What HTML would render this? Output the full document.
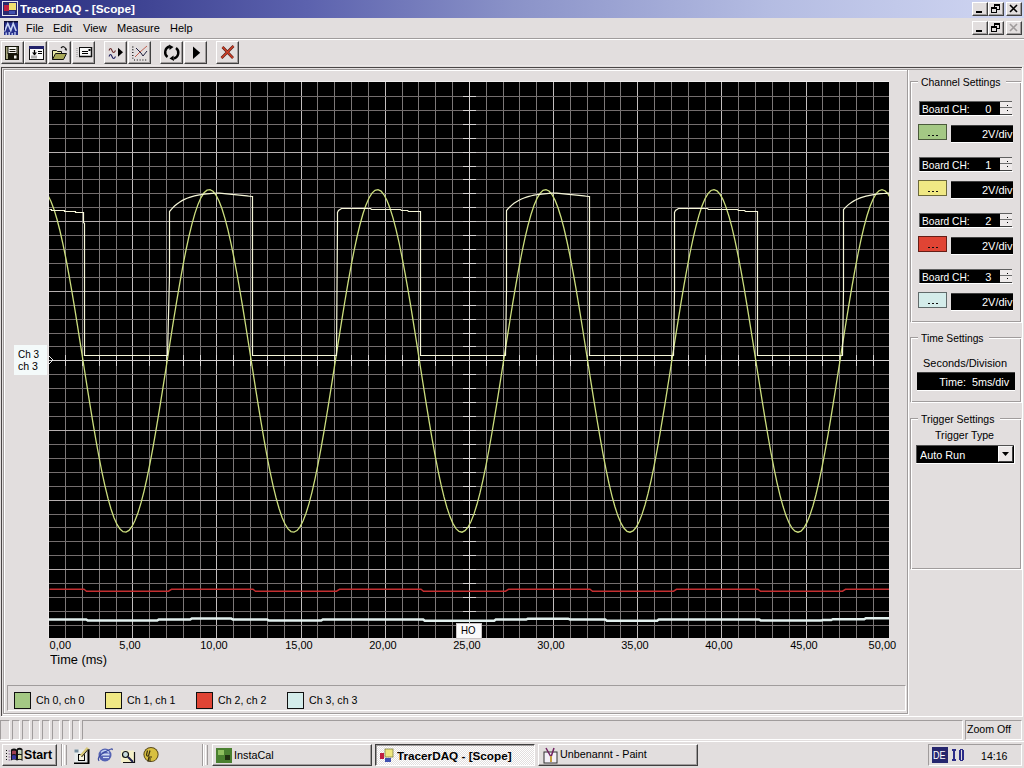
<!DOCTYPE html>
<html><head><meta charset="utf-8"><title>TracerDAQ - [Scope]</title>
<style>
html,body{margin:0;padding:0;}
body{width:1024px;height:768px;overflow:hidden;position:relative;background:#E2DEDE;font-family:"Liberation Sans",sans-serif;}
body>div{position:absolute;}
.t{white-space:pre;transform-origin:left center;}
</style></head><body>
<div style="left:0px;top:0px;width:1024px;height:18px;background:linear-gradient(to right,#262A7C 0%,#5C62AE 30%,#8A92C8 50%,#B4BCE2 75%,#D0D6F2 100%)"></div>
<div class="t" style="left:20px;top:4.27px;font-size:11.5px;line-height:11.5px;font-weight:700;color:#FFF;transform:scaleX(1.022);">TracerDAQ - [Scope]</div>
<svg style="position:absolute;left:2px;top:1px" width="16" height="15" viewBox="0 0 16 15">
<rect x="0.5" y="0.5" width="15" height="14" fill="#2A2A70" stroke="#E8E8F0"/>
<rect x="2" y="4" width="5" height="6" fill="#C02040"/>
<rect x="7" y="2" width="7" height="7" fill="#F0E070"/>
<rect x="7" y="10" width="6" height="3" fill="#4050B0"/>
</svg>
<div style="left:972px;top:2px;width:16px;height:14px;background:#E2DEDE;border-top:1px solid #FFF;border-left:1px solid #FFF;border-right:1px solid #404040;border-bottom:1px solid #404040;box-sizing:border-box"></div>
<div style="left:973px;top:3px;width:14px;height:12px;border-right:1px solid #A09C9C;border-bottom:1px solid #A09C9C;box-sizing:border-box"></div>
<div style="left:976px;top:11px;width:6px;height:2px;background:#000"></div>
<div style="left:988px;top:2px;width:16px;height:14px;background:#E2DEDE;border-top:1px solid #FFF;border-left:1px solid #FFF;border-right:1px solid #404040;border-bottom:1px solid #404040;box-sizing:border-box"></div>
<div style="left:989px;top:3px;width:14px;height:12px;border-right:1px solid #A09C9C;border-bottom:1px solid #A09C9C;box-sizing:border-box"></div>
<svg style="position:absolute;left:988px;top:2px" width="16" height="14" fill="#000"><rect x="6" y="2" width="6" height="2"/><rect x="11" y="4" width="1" height="4"/><rect x="9" y="7" width="2" height="1"/><rect x="6" y="4" width="1" height="1"/><rect x="3" y="5" width="6" height="2"/><rect x="3" y="7" width="1" height="4"/><rect x="8" y="7" width="1" height="4"/><rect x="3" y="10" width="6" height="1"/></svg>
<div style="left:1006px;top:2px;width:16px;height:14px;background:#E2DEDE;border-top:1px solid #FFF;border-left:1px solid #FFF;border-right:1px solid #404040;border-bottom:1px solid #404040;box-sizing:border-box"></div>
<div style="left:1007px;top:3px;width:14px;height:12px;border-right:1px solid #A09C9C;border-bottom:1px solid #A09C9C;box-sizing:border-box"></div>
<svg style="position:absolute;left:1006px;top:2px" width="16" height="14"><path d="M4 3L11 10M11 3L4 10" stroke="#000" stroke-width="1.6"/></svg>
<svg style="position:absolute;left:4px;top:21px" width="14" height="14" viewBox="0 0 14 14">
<rect width="14" height="14" fill="#26308C"/>
<rect width="14" height="1.5" fill="#0C0C30"/>
<path d="M0.5 10.5L3.8 2.5L6.8 9.5L9.2 2.5L12.2 10" fill="none" stroke="#C8D4F4" stroke-width="1.6"/>
<path d="M2.2 14V11.5M5.2 14V11M8.2 14V12M11 14V11" stroke="#C8D4F4" stroke-width="1.3"/>
<path d="M0 1.5h1v8H0z" fill="#101050"/>
</svg>
<div class="t" style="left:26px;top:22.99px;font-size:11px;line-height:11px;font-weight:400;color:#000;">File</div>
<div class="t" style="left:53px;top:22.99px;font-size:11px;line-height:11px;font-weight:400;color:#000;">Edit</div>
<div class="t" style="left:83px;top:22.99px;font-size:11px;line-height:11px;font-weight:400;color:#000;">View</div>
<div class="t" style="left:117px;top:22.99px;font-size:11px;line-height:11px;font-weight:400;color:#000;">Measure</div>
<div class="t" style="left:170px;top:22.99px;font-size:11px;line-height:11px;font-weight:400;color:#000;">Help</div>
<div style="left:972px;top:21px;width:16px;height:14px;background:#E2DEDE;border-top:1px solid #FFF;border-left:1px solid #FFF;border-right:1px solid #404040;border-bottom:1px solid #404040;box-sizing:border-box"></div>
<div style="left:973px;top:22px;width:14px;height:12px;border-right:1px solid #A09C9C;border-bottom:1px solid #A09C9C;box-sizing:border-box"></div>
<div style="left:976px;top:30px;width:6px;height:2px;background:#000"></div>
<div style="left:988px;top:21px;width:16px;height:14px;background:#E2DEDE;border-top:1px solid #FFF;border-left:1px solid #FFF;border-right:1px solid #404040;border-bottom:1px solid #404040;box-sizing:border-box"></div>
<div style="left:989px;top:22px;width:14px;height:12px;border-right:1px solid #A09C9C;border-bottom:1px solid #A09C9C;box-sizing:border-box"></div>
<svg style="position:absolute;left:988px;top:21px" width="16" height="14" fill="#000"><rect x="6" y="2" width="6" height="2"/><rect x="11" y="4" width="1" height="4"/><rect x="9" y="7" width="2" height="1"/><rect x="6" y="4" width="1" height="1"/><rect x="3" y="5" width="6" height="2"/><rect x="3" y="7" width="1" height="4"/><rect x="8" y="7" width="1" height="4"/><rect x="3" y="10" width="6" height="1"/></svg>
<div style="left:1006px;top:21px;width:16px;height:14px;background:#E2DEDE;border-top:1px solid #FFF;border-left:1px solid #FFF;border-right:1px solid #404040;border-bottom:1px solid #404040;box-sizing:border-box"></div>
<div style="left:1007px;top:22px;width:14px;height:12px;border-right:1px solid #A09C9C;border-bottom:1px solid #A09C9C;box-sizing:border-box"></div>
<svg style="position:absolute;left:1006px;top:21px" width="16" height="14"><path d="M4 3L11 10M11 3L4 10" stroke="#A09C9C" stroke-width="1.6"/></svg>
<div style="left:0px;top:38px;width:1024px;height:1px;background:#A09C9C"></div>
<div style="left:0px;top:39px;width:1024px;height:1px;background:#FFF"></div>
<div style="left:1px;top:41px;width:23px;height:23px;background:#E2DEDE;border-top:1px solid #FFF;border-left:1px solid #FFF;border-right:1px solid #404040;border-bottom:1px solid #404040;box-sizing:border-box"></div>
<div style="left:2px;top:42px;width:21px;height:21px;border-right:1px solid #A09C9C;border-bottom:1px solid #A09C9C;box-sizing:border-box"></div>
<div style="left:24px;top:41px;width:23px;height:23px;background:#E2DEDE;border-top:1px solid #FFF;border-left:1px solid #FFF;border-right:1px solid #404040;border-bottom:1px solid #404040;box-sizing:border-box"></div>
<div style="left:25px;top:42px;width:21px;height:21px;border-right:1px solid #A09C9C;border-bottom:1px solid #A09C9C;box-sizing:border-box"></div>
<div style="left:48px;top:41px;width:23px;height:23px;background:#E2DEDE;border-top:1px solid #FFF;border-left:1px solid #FFF;border-right:1px solid #404040;border-bottom:1px solid #404040;box-sizing:border-box"></div>
<div style="left:49px;top:42px;width:21px;height:21px;border-right:1px solid #A09C9C;border-bottom:1px solid #A09C9C;box-sizing:border-box"></div>
<div style="left:72px;top:41px;width:23px;height:23px;background:#E2DEDE;border-top:1px solid #FFF;border-left:1px solid #FFF;border-right:1px solid #404040;border-bottom:1px solid #404040;box-sizing:border-box"></div>
<div style="left:73px;top:42px;width:21px;height:21px;border-right:1px solid #A09C9C;border-bottom:1px solid #A09C9C;box-sizing:border-box"></div>
<div style="left:104px;top:41px;width:23px;height:23px;background:#E2DEDE;border-top:1px solid #FFF;border-left:1px solid #FFF;border-right:1px solid #404040;border-bottom:1px solid #404040;box-sizing:border-box"></div>
<div style="left:105px;top:42px;width:21px;height:21px;border-right:1px solid #A09C9C;border-bottom:1px solid #A09C9C;box-sizing:border-box"></div>
<div style="left:128px;top:41px;width:23px;height:23px;background:#E2DEDE;border-top:1px solid #FFF;border-left:1px solid #FFF;border-right:1px solid #404040;border-bottom:1px solid #404040;box-sizing:border-box"></div>
<div style="left:129px;top:42px;width:21px;height:21px;border-right:1px solid #A09C9C;border-bottom:1px solid #A09C9C;box-sizing:border-box"></div>
<div style="left:160px;top:41px;width:23px;height:23px;background:#E2DEDE;border-top:1px solid #FFF;border-left:1px solid #FFF;border-right:1px solid #404040;border-bottom:1px solid #404040;box-sizing:border-box"></div>
<div style="left:161px;top:42px;width:21px;height:21px;border-right:1px solid #A09C9C;border-bottom:1px solid #A09C9C;box-sizing:border-box"></div>
<div style="left:184px;top:41px;width:23px;height:23px;background:#E2DEDE;border-top:1px solid #FFF;border-left:1px solid #FFF;border-right:1px solid #404040;border-bottom:1px solid #404040;box-sizing:border-box"></div>
<div style="left:185px;top:42px;width:21px;height:21px;border-right:1px solid #A09C9C;border-bottom:1px solid #A09C9C;box-sizing:border-box"></div>
<div style="left:216px;top:41px;width:23px;height:23px;background:#E2DEDE;border-top:1px solid #FFF;border-left:1px solid #FFF;border-right:1px solid #404040;border-bottom:1px solid #404040;box-sizing:border-box"></div>
<div style="left:217px;top:42px;width:21px;height:21px;border-right:1px solid #A09C9C;border-bottom:1px solid #A09C9C;box-sizing:border-box"></div>
<svg style="position:absolute;left:1px;top:41px" width="23" height="22"><rect x="4" y="5" width="14" height="14" fill="#151508"/><rect x="5" y="6" width="12" height="12" fill="#A4A47C"/><rect x="7" y="5.5" width="9" height="7" fill="#F4F4F0" stroke="#151508" stroke-width="1"/><path d="M8.5 8.5h6M8.5 10.5h6" stroke="#151508" stroke-width="1"/><rect x="7" y="13" width="10" height="6" fill="#151508"/><rect x="13" y="14.5" width="2.5" height="3" fill="#F0F0E8"/></svg>
<svg style="position:absolute;left:24px;top:41px" width="23" height="22"><rect x="5.5" y="5.5" width="14" height="13" fill="#FAFAFA" stroke="#101010"/><rect x="5" y="5" width="15" height="3" fill="#22226A"/><path d="M10.5 9v5" stroke="#000" stroke-width="1.3"/><path d="M8 11.5l2.5 3 2.5-3z" fill="#000"/><rect x="7" y="14.5" width="6" height="3" fill="#B0B0B0"/><path d="M14 10.5h4M14 12.5h4" stroke="#000"/></svg>
<svg style="position:absolute;left:48px;top:41px" width="23" height="22"><path d="M13 7q2.5-3 5 1" stroke="#101010" stroke-width="1.2" fill="none"/><path d="M16.5 8.5l2.5-1-0.5 2.5z" fill="#101010"/><path d="M4.5 18.5V9.5h4l1 1h4v3" fill="#E8E8A8" stroke="#101010"/><path d="M4.5 18.5l3-6h11l-3 6z" fill="#A8A858" stroke="#101010"/></svg>
<svg style="position:absolute;left:72px;top:41px" width="23" height="22"><path d="M5 7v9" stroke="#8C8C8C" stroke-dasharray="1 1"/><rect x="7.5" y="6.5" width="12" height="9" fill="#FAFAFA" stroke="#101010"/><path d="M7 15.5h13M19.5 6v10" stroke="#101010" stroke-width="1.5"/><path d="M10 10.5h6M10 12.5h6" stroke="#000"/><rect x="16.5" y="8" width="2" height="2" fill="#000"/></svg>
<svg style="position:absolute;left:104px;top:41px" width="23" height="22"><path d="M5 9.5q1.5-4 3 0t3.5 0" stroke="#703030" stroke-width="1.1" fill="none"/><path d="M5 15.5q1.5-4 3 0t3.5 0" stroke="#202060" stroke-width="1.1" fill="none"/><path d="M14 6.8l5 4.5-5 4.5z" fill="#000"/></svg>
<svg style="position:absolute;left:128px;top:41px" width="23" height="22"><path d="M4.8 5.5v12M6 19h13" stroke="#000" stroke-width="1.2" stroke-dasharray="1 1.8"/><path d="M7 16l5-5 7-6" stroke="#C06050" fill="none"/><path d="M8 7l5 5 2 3 4-5" stroke="#202040" fill="none"/></svg>
<svg style="position:absolute;left:160px;top:41px" width="23" height="22"><path d="M7.5 16a6 6 0 0 1 2-10.5" stroke="#000" stroke-width="2.4" fill="none"/><path d="M16 7a6 6 0 0 1-2 10.5" stroke="#000" stroke-width="2.4" fill="none"/><path d="M9 3.5l4.5 2.5-4 3z" fill="#000"/><path d="M14 20l-4.5-2.5 4-3z" fill="#000"/></svg>
<svg style="position:absolute;left:184px;top:41px" width="23" height="22"><path d="M9 5.6l7.2 6.2-7.2 6.1z" fill="#000"/></svg>
<svg style="position:absolute;left:216px;top:41px" width="23" height="22"><path d="M5.5 17L17.5 5M6.5 6L17 17" stroke="#5A2018" stroke-width="2.6"/><path d="M5.5 17L17.5 5M6.5 6L17 17" stroke="#D04028" stroke-width="1.4"/></svg>
<div style="left:0px;top:65px;width:1024px;height:1px;background:#ECE8E8"></div>
<div style="left:1px;top:67px;width:1022px;height:1px;background:#4A4646"></div>
<div style="left:1px;top:67px;width:1px;height:649px;background:#4A4646"></div>
<div style="left:3px;top:69px;width:1018px;height:1px;background:#A09C9C"></div>
<div style="left:3px;top:69px;width:1px;height:645px;background:#A09C9C"></div>
<div style="left:4px;top:70px;width:904px;height:1px;background:#FFF"></div>
<div style="left:4px;top:70px;width:1px;height:643px;background:#FFF"></div>
<div style="left:907px;top:70px;width:1px;height:644px;background:#A09C9C"></div>
<div style="left:908px;top:70px;width:1px;height:645px;background:#FFF"></div>
<div style="left:4px;top:713px;width:904px;height:1px;background:#A09C9C"></div>
<div style="left:3px;top:714px;width:906px;height:1px;background:#FFF"></div>
<div style="left:1022px;top:67px;width:1px;height:650px;background:#FFF"></div>
<div style="left:1px;top:716px;width:1022px;height:1px;background:#FFF"></div>
<svg style="position:absolute;left:0;top:0" width="1024" height="768" shape-rendering="crispEdges">
<rect x="49" y="82" width="840" height="556" fill="#000"/>
<rect x="49" y="81" width="840" height="1" fill="#F0EEEE"/>
<rect x="48" y="81" width="1" height="557" fill="#ECE8E8"/>
<rect x="65" y="82" width="1" height="556" fill="#7C7878"/>
<rect x="82" y="82" width="1" height="556" fill="#7C7878"/>
<rect x="99" y="82" width="1" height="556" fill="#7C7878"/>
<rect x="116" y="82" width="1" height="556" fill="#7C7878"/>
<rect x="132" y="82" width="1" height="556" fill="#C2BEBE"/>
<rect x="149" y="82" width="1" height="556" fill="#7C7878"/>
<rect x="166" y="82" width="1" height="556" fill="#7C7878"/>
<rect x="183" y="82" width="1" height="556" fill="#7C7878"/>
<rect x="200" y="82" width="1" height="556" fill="#7C7878"/>
<rect x="216" y="82" width="1" height="556" fill="#C2BEBE"/>
<rect x="233" y="82" width="1" height="556" fill="#7C7878"/>
<rect x="250" y="82" width="1" height="556" fill="#7C7878"/>
<rect x="267" y="82" width="1" height="556" fill="#7C7878"/>
<rect x="284" y="82" width="1" height="556" fill="#7C7878"/>
<rect x="301" y="82" width="1" height="556" fill="#C2BEBE"/>
<rect x="317" y="82" width="1" height="556" fill="#7C7878"/>
<rect x="334" y="82" width="1" height="556" fill="#7C7878"/>
<rect x="351" y="82" width="1" height="556" fill="#7C7878"/>
<rect x="368" y="82" width="1" height="556" fill="#7C7878"/>
<rect x="385" y="82" width="1" height="556" fill="#C2BEBE"/>
<rect x="402" y="82" width="1" height="556" fill="#7C7878"/>
<rect x="418" y="82" width="1" height="556" fill="#7C7878"/>
<rect x="435" y="82" width="1" height="556" fill="#7C7878"/>
<rect x="452" y="82" width="1" height="556" fill="#7C7878"/>
<rect x="469" y="82" width="1" height="556" fill="#C2BEBE"/>
<rect x="486" y="82" width="1" height="556" fill="#7C7878"/>
<rect x="503" y="82" width="1" height="556" fill="#7C7878"/>
<rect x="519" y="82" width="1" height="556" fill="#7C7878"/>
<rect x="536" y="82" width="1" height="556" fill="#7C7878"/>
<rect x="553" y="82" width="1" height="556" fill="#C2BEBE"/>
<rect x="570" y="82" width="1" height="556" fill="#7C7878"/>
<rect x="587" y="82" width="1" height="556" fill="#7C7878"/>
<rect x="604" y="82" width="1" height="556" fill="#7C7878"/>
<rect x="620" y="82" width="1" height="556" fill="#7C7878"/>
<rect x="637" y="82" width="1" height="556" fill="#C2BEBE"/>
<rect x="654" y="82" width="1" height="556" fill="#7C7878"/>
<rect x="671" y="82" width="1" height="556" fill="#7C7878"/>
<rect x="688" y="82" width="1" height="556" fill="#7C7878"/>
<rect x="705" y="82" width="1" height="556" fill="#7C7878"/>
<rect x="721" y="82" width="1" height="556" fill="#C2BEBE"/>
<rect x="738" y="82" width="1" height="556" fill="#7C7878"/>
<rect x="755" y="82" width="1" height="556" fill="#7C7878"/>
<rect x="772" y="82" width="1" height="556" fill="#7C7878"/>
<rect x="789" y="82" width="1" height="556" fill="#7C7878"/>
<rect x="806" y="82" width="1" height="556" fill="#C2BEBE"/>
<rect x="822" y="82" width="1" height="556" fill="#7C7878"/>
<rect x="839" y="82" width="1" height="556" fill="#7C7878"/>
<rect x="856" y="82" width="1" height="556" fill="#7C7878"/>
<rect x="873" y="82" width="1" height="556" fill="#7C7878"/>
<rect x="49" y="96" width="840" height="1" fill="#746E6E"/>
<rect x="49" y="110" width="840" height="1" fill="#746E6E"/>
<rect x="49" y="124" width="840" height="1" fill="#746E6E"/>
<rect x="49" y="138" width="840" height="1" fill="#746E6E"/>
<rect x="49" y="152" width="840" height="1" fill="#B6B0B0"/>
<rect x="49" y="166" width="840" height="1" fill="#746E6E"/>
<rect x="49" y="179" width="840" height="1" fill="#746E6E"/>
<rect x="49" y="193" width="840" height="1" fill="#746E6E"/>
<rect x="49" y="207" width="840" height="1" fill="#746E6E"/>
<rect x="49" y="221" width="840" height="1" fill="#B6B0B0"/>
<rect x="49" y="235" width="840" height="1" fill="#746E6E"/>
<rect x="49" y="249" width="840" height="1" fill="#746E6E"/>
<rect x="49" y="263" width="840" height="1" fill="#746E6E"/>
<rect x="49" y="277" width="840" height="1" fill="#746E6E"/>
<rect x="49" y="291" width="840" height="1" fill="#B6B0B0"/>
<rect x="49" y="305" width="840" height="1" fill="#746E6E"/>
<rect x="49" y="319" width="840" height="1" fill="#746E6E"/>
<rect x="49" y="333" width="840" height="1" fill="#746E6E"/>
<rect x="49" y="346" width="840" height="1" fill="#746E6E"/>
<rect x="49" y="360" width="840" height="1" fill="#B6B0B0"/>
<rect x="49" y="374" width="840" height="1" fill="#746E6E"/>
<rect x="49" y="388" width="840" height="1" fill="#746E6E"/>
<rect x="49" y="402" width="840" height="1" fill="#746E6E"/>
<rect x="49" y="416" width="840" height="1" fill="#746E6E"/>
<rect x="49" y="430" width="840" height="1" fill="#B6B0B0"/>
<rect x="49" y="444" width="840" height="1" fill="#746E6E"/>
<rect x="49" y="458" width="840" height="1" fill="#746E6E"/>
<rect x="49" y="472" width="840" height="1" fill="#746E6E"/>
<rect x="49" y="486" width="840" height="1" fill="#746E6E"/>
<rect x="49" y="500" width="840" height="1" fill="#B6B0B0"/>
<rect x="49" y="514" width="840" height="1" fill="#746E6E"/>
<rect x="49" y="527" width="840" height="1" fill="#746E6E"/>
<rect x="49" y="541" width="840" height="1" fill="#746E6E"/>
<rect x="49" y="555" width="840" height="1" fill="#746E6E"/>
<rect x="49" y="569" width="840" height="1" fill="#B6B0B0"/>
<rect x="49" y="583" width="840" height="1" fill="#746E6E"/>
<rect x="49" y="597" width="840" height="1" fill="#746E6E"/>
<rect x="49" y="611" width="840" height="1" fill="#746E6E"/>
<rect x="49" y="625" width="840" height="1" fill="#746E6E"/>
<rect x="469" y="82" width="1" height="556" fill="#D6D2D2"/>
<rect x="49" y="360" width="840" height="1" fill="#D6D2D2"/>
<rect x="463" y="96" width="13" height="1" fill="#D6D2D2"/>
<rect x="463" y="110" width="13" height="1" fill="#D6D2D2"/>
<rect x="463" y="124" width="13" height="1" fill="#D6D2D2"/>
<rect x="463" y="138" width="13" height="1" fill="#D6D2D2"/>
<rect x="463" y="152" width="13" height="1" fill="#D6D2D2"/>
<rect x="463" y="166" width="13" height="1" fill="#D6D2D2"/>
<rect x="463" y="179" width="13" height="1" fill="#D6D2D2"/>
<rect x="463" y="193" width="13" height="1" fill="#D6D2D2"/>
<rect x="463" y="207" width="13" height="1" fill="#D6D2D2"/>
<rect x="463" y="221" width="13" height="1" fill="#D6D2D2"/>
<rect x="463" y="235" width="13" height="1" fill="#D6D2D2"/>
<rect x="463" y="249" width="13" height="1" fill="#D6D2D2"/>
<rect x="463" y="263" width="13" height="1" fill="#D6D2D2"/>
<rect x="463" y="277" width="13" height="1" fill="#D6D2D2"/>
<rect x="463" y="291" width="13" height="1" fill="#D6D2D2"/>
<rect x="463" y="305" width="13" height="1" fill="#D6D2D2"/>
<rect x="463" y="319" width="13" height="1" fill="#D6D2D2"/>
<rect x="463" y="333" width="13" height="1" fill="#D6D2D2"/>
<rect x="463" y="346" width="13" height="1" fill="#D6D2D2"/>
<rect x="463" y="360" width="13" height="1" fill="#D6D2D2"/>
<rect x="463" y="374" width="13" height="1" fill="#D6D2D2"/>
<rect x="463" y="388" width="13" height="1" fill="#D6D2D2"/>
<rect x="463" y="402" width="13" height="1" fill="#D6D2D2"/>
<rect x="463" y="416" width="13" height="1" fill="#D6D2D2"/>
<rect x="463" y="430" width="13" height="1" fill="#D6D2D2"/>
<rect x="463" y="444" width="13" height="1" fill="#D6D2D2"/>
<rect x="463" y="458" width="13" height="1" fill="#D6D2D2"/>
<rect x="463" y="472" width="13" height="1" fill="#D6D2D2"/>
<rect x="463" y="486" width="13" height="1" fill="#D6D2D2"/>
<rect x="463" y="500" width="13" height="1" fill="#D6D2D2"/>
<rect x="463" y="514" width="13" height="1" fill="#D6D2D2"/>
<rect x="463" y="527" width="13" height="1" fill="#D6D2D2"/>
<rect x="463" y="541" width="13" height="1" fill="#D6D2D2"/>
<rect x="463" y="555" width="13" height="1" fill="#D6D2D2"/>
<rect x="463" y="569" width="13" height="1" fill="#D6D2D2"/>
<rect x="463" y="583" width="13" height="1" fill="#D6D2D2"/>
<rect x="463" y="597" width="13" height="1" fill="#D6D2D2"/>
<rect x="463" y="611" width="13" height="1" fill="#D6D2D2"/>
<rect x="463" y="625" width="13" height="1" fill="#D6D2D2"/>
<rect x="65" y="355" width="1" height="11" fill="#D6D2D2"/>
<rect x="82" y="355" width="1" height="11" fill="#D6D2D2"/>
<rect x="99" y="355" width="1" height="11" fill="#D6D2D2"/>
<rect x="116" y="355" width="1" height="11" fill="#D6D2D2"/>
<rect x="132" y="355" width="1" height="11" fill="#D6D2D2"/>
<rect x="149" y="355" width="1" height="11" fill="#D6D2D2"/>
<rect x="166" y="355" width="1" height="11" fill="#D6D2D2"/>
<rect x="183" y="355" width="1" height="11" fill="#D6D2D2"/>
<rect x="200" y="355" width="1" height="11" fill="#D6D2D2"/>
<rect x="216" y="355" width="1" height="11" fill="#D6D2D2"/>
<rect x="233" y="355" width="1" height="11" fill="#D6D2D2"/>
<rect x="250" y="355" width="1" height="11" fill="#D6D2D2"/>
<rect x="267" y="355" width="1" height="11" fill="#D6D2D2"/>
<rect x="284" y="355" width="1" height="11" fill="#D6D2D2"/>
<rect x="301" y="355" width="1" height="11" fill="#D6D2D2"/>
<rect x="317" y="355" width="1" height="11" fill="#D6D2D2"/>
<rect x="334" y="355" width="1" height="11" fill="#D6D2D2"/>
<rect x="351" y="355" width="1" height="11" fill="#D6D2D2"/>
<rect x="368" y="355" width="1" height="11" fill="#D6D2D2"/>
<rect x="385" y="355" width="1" height="11" fill="#D6D2D2"/>
<rect x="402" y="355" width="1" height="11" fill="#D6D2D2"/>
<rect x="418" y="355" width="1" height="11" fill="#D6D2D2"/>
<rect x="435" y="355" width="1" height="11" fill="#D6D2D2"/>
<rect x="452" y="355" width="1" height="11" fill="#D6D2D2"/>
<rect x="469" y="355" width="1" height="11" fill="#D6D2D2"/>
<rect x="486" y="355" width="1" height="11" fill="#D6D2D2"/>
<rect x="503" y="355" width="1" height="11" fill="#D6D2D2"/>
<rect x="519" y="355" width="1" height="11" fill="#D6D2D2"/>
<rect x="536" y="355" width="1" height="11" fill="#D6D2D2"/>
<rect x="553" y="355" width="1" height="11" fill="#D6D2D2"/>
<rect x="570" y="355" width="1" height="11" fill="#D6D2D2"/>
<rect x="587" y="355" width="1" height="11" fill="#D6D2D2"/>
<rect x="604" y="355" width="1" height="11" fill="#D6D2D2"/>
<rect x="620" y="355" width="1" height="11" fill="#D6D2D2"/>
<rect x="637" y="355" width="1" height="11" fill="#D6D2D2"/>
<rect x="654" y="355" width="1" height="11" fill="#D6D2D2"/>
<rect x="671" y="355" width="1" height="11" fill="#D6D2D2"/>
<rect x="688" y="355" width="1" height="11" fill="#D6D2D2"/>
<rect x="705" y="355" width="1" height="11" fill="#D6D2D2"/>
<rect x="721" y="355" width="1" height="11" fill="#D6D2D2"/>
<rect x="738" y="355" width="1" height="11" fill="#D6D2D2"/>
<rect x="755" y="355" width="1" height="11" fill="#D6D2D2"/>
<rect x="772" y="355" width="1" height="11" fill="#D6D2D2"/>
<rect x="789" y="355" width="1" height="11" fill="#D6D2D2"/>
<rect x="806" y="355" width="1" height="11" fill="#D6D2D2"/>
<rect x="822" y="355" width="1" height="11" fill="#D6D2D2"/>
<rect x="839" y="355" width="1" height="11" fill="#D6D2D2"/>
<rect x="856" y="355" width="1" height="11" fill="#D6D2D2"/>
<rect x="873" y="355" width="1" height="11" fill="#D6D2D2"/>
</svg>
<svg style="position:absolute;left:0;top:0" width="1024" height="768">
<defs><clipPath id="pc"><rect x="49" y="82" width="840" height="556"/></clipPath></defs><g clip-path="url(#pc)">
<polyline fill="none" stroke="#C42E30" stroke-width="1.4" points="49.50,589.30 84.00,589.30 86.50,591.20 168.50,591.20 171.50,589.30 253.00,589.30 255.50,591.20 336.50,591.20 339.50,589.30 421.00,589.30 423.50,591.20 505.50,591.20 508.50,589.30 590.00,589.30 592.50,591.20 673.50,591.20 676.50,589.30 758.00,589.30 760.50,591.20 842.50,591.20 845.50,589.30 889.50,589.30"/>
<polyline fill="none" stroke="#E2F0EE" stroke-width="2.5" points="49.00,619.50 86.20,619.50 87.80,620.50 157.20,620.50 158.80,619.50 190.20,619.50 191.80,618.50 231.20,618.50 232.80,619.50 267.20,619.50 268.80,620.50 321.20,620.50 322.80,619.50 423.20,619.50 424.80,620.70 494.20,620.70 495.80,619.50 526.20,619.50 527.80,618.70 568.20,618.70 569.80,619.40 605.20,619.40 606.80,620.70 657.20,620.70 658.80,619.40 759.20,619.40 760.80,620.60 821.20,620.60 822.80,620.00 831.20,620.00 832.80,619.20 864.20,619.20 865.80,618.20 889.00,618.20"/>
<polyline fill="none" stroke="#CCDE7E" stroke-width="1.3" points="45.0,191.5 48.0,195.4 51.0,201.4 54.0,209.4 57.0,219.3 60.0,231.0 63.0,244.3 66.0,259.0 69.0,275.1 72.0,292.2 75.0,310.2 78.0,328.8 81.0,347.8 84.0,367.0 87.0,386.1 90.0,404.9 93.0,423.1 96.0,440.6 99.0,457.0 102.0,472.3 105.0,486.1 108.0,498.4 111.0,509.0 114.0,517.7 117.0,524.4 120.0,529.1 123.0,531.7 126.0,532.1 129.0,530.4 132.0,526.5 135.0,520.6 138.0,512.7 141.0,502.9 144.0,491.3 147.0,478.0 150.0,463.3 153.0,447.3 156.0,430.2 159.0,412.2 162.0,393.7 165.0,374.6 168.0,355.5 171.0,336.3 174.0,317.5 177.0,299.3 180.0,281.8 183.0,265.3 186.0,250.0 189.0,236.1 192.0,223.8 195.0,213.1 198.0,204.4 201.0,197.6 204.0,192.8 207.0,190.2 210.0,189.7 213.0,191.3 216.0,195.1 219.0,201.0 222.0,208.8 225.0,218.6 228.0,230.1 231.0,243.3 234.0,258.0 237.0,274.0 240.0,291.0 243.0,308.9 246.0,327.5 249.0,346.5 252.0,365.7 255.0,384.8 258.0,403.6 261.0,421.9 264.0,439.4 267.0,456.0 270.0,471.3 273.0,485.3 276.0,497.7 279.0,508.3 282.0,517.2 285.0,524.0 288.0,528.9 291.0,531.6 294.0,532.1 297.0,530.6 300.0,526.9 303.0,521.1 306.0,513.3 309.0,503.6 312.0,492.1 315.0,478.9 318.0,464.3 321.0,448.4 324.0,431.4 327.0,413.5 330.0,394.9 333.0,375.9 336.0,356.7 339.0,337.6 342.0,318.8 345.0,300.5 348.0,282.9 351.0,266.4 354.0,251.0 357.0,237.0 360.0,224.5 363.0,213.8 366.0,204.9 369.0,198.0 372.0,193.1 375.0,190.3 378.0,189.6 381.0,191.1 384.0,194.8 387.0,200.5 390.0,208.2 393.0,217.9 396.0,229.3 399.0,242.4 402.0,257.0 405.0,272.9 408.0,289.8 411.0,307.7 414.0,326.3 417.0,345.2 420.0,364.4 423.0,383.5 426.0,402.4 429.0,420.7 432.0,438.3 435.0,454.9 438.0,470.3 441.0,484.4 444.0,496.9 447.0,507.7 450.0,516.6 453.0,523.6 456.0,528.6 459.0,531.5 462.0,532.2 465.0,530.7 468.0,527.2 471.0,521.5 474.0,513.9 477.0,504.3 480.0,492.9 483.0,479.9 486.0,465.3 489.0,449.5 492.0,432.5 495.0,414.7 498.0,396.2 501.0,377.2 504.0,358.0 507.0,338.9 510.0,320.0 513.0,301.7 516.0,284.1 519.0,267.4 522.0,252.0 525.0,237.9 528.0,225.3 531.0,214.5 534.0,205.4 537.0,198.4 540.0,193.3 543.0,190.4 546.0,189.6 549.0,191.0 552.0,194.5 555.0,200.1 558.0,207.7 561.0,217.2 564.0,228.5 567.0,241.5 570.0,256.0 573.0,271.8 576.0,288.7 579.0,306.5 582.0,325.0 585.0,344.0 588.0,363.1 591.0,382.3 594.0,401.2 597.0,419.5 600.0,437.2 603.0,453.8 606.0,469.3 609.0,483.5 612.0,496.1 615.0,507.0 618.0,516.1 621.0,523.2 624.0,528.3 627.0,531.3 630.0,532.2 633.0,530.9 636.0,527.5 639.0,522.0 642.0,514.4 645.0,505.0 648.0,493.7 651.0,480.8 654.0,466.3 657.0,450.6 660.0,433.7 663.0,415.9 666.0,397.4 669.0,378.5 672.0,359.3 675.0,340.2 678.0,321.3 681.0,302.9 684.0,285.2 687.0,268.5 690.0,253.0 693.0,238.8 696.0,226.1 699.0,215.1 702.0,206.0 705.0,198.8 708.0,193.6 711.0,190.5 714.0,189.6 717.0,190.8 720.0,194.2 723.0,199.6 726.0,207.1 729.0,216.5 732.0,227.7 735.0,240.6 738.0,255.0 741.0,270.7 744.0,287.5 747.0,305.3 750.0,323.8 753.0,342.7 756.0,361.9 759.0,381.0 762.0,399.9 765.0,418.3 768.0,436.0 771.0,452.8 774.0,468.3 777.0,482.6 780.0,495.3 783.0,506.3 786.0,515.6 789.0,522.8 792.0,528.1 795.0,531.2 798.0,532.2 801.0,531.1 804.0,527.8 807.0,522.4 810.0,515.0 813.0,505.7 816.0,494.5 819.0,481.7 822.0,467.3 825.0,451.7 828.0,434.9 831.0,417.1 834.0,398.7 837.0,379.7 840.0,360.6 843.0,341.4 846.0,322.5 849.0,304.1 852.0,286.4 855.0,269.6 858.0,254.0 861.0,239.7 864.0,226.9 867.0,215.8 870.0,206.5 873.0,199.2 876.0,193.9 879.0,190.7 882.0,189.6 885.0,190.7 888.0,193.9 891.0,199.2"/>
<polyline fill="none" stroke="#F6F6D8" stroke-width="1.2" stroke-linejoin="miter" points="49.50,209.50 51.50,209.50 51.50,210.50 64.50,210.50 64.50,211.50 75.50,211.50 75.50,212.50 83.50,212.50 83.50,222.50 84.50,223.50 84.50,355.50 167.50,355.50 169.50,275.50 169.50,211.50 172.00,208.55 174.50,206.06 177.00,203.95 179.50,202.16 182.00,200.64 184.50,199.36 187.00,198.28 189.50,197.36 192.00,196.58 194.50,195.93 197.00,195.37 199.50,194.90 202.00,194.50 204.50,194.16 207.00,193.88 209.50,193.63 212.00,193.43 214.50,193.26 217.00,193.11 219.50,193.22 222.00,193.42 224.50,193.63 227.00,193.86 229.50,194.09 232.00,194.34 234.50,194.59 237.00,194.85 239.50,195.12 242.00,195.39 244.50,195.67 247.00,195.95 249.50,196.23 252.00,196.52 252.50,196.50 252.50,355.50 336.50,355.50 337.50,222.50 337.50,212.50 338.50,210.50 341.50,208.50 370.50,208.50 371.50,209.50 400.50,209.50 401.50,210.50 407.50,210.50 408.50,211.50 420.50,211.50 420.50,355.50 505.50,355.50 506.50,290.50 506.50,210.50 509.00,207.71 511.50,205.34 514.00,203.34 516.50,201.64 519.00,200.21 521.50,199.00 524.00,197.97 526.50,197.10 529.00,196.36 531.50,195.74 534.00,195.21 536.50,194.76 539.00,194.38 541.50,194.06 544.00,193.79 546.50,193.56 549.00,193.37 551.50,193.21 554.00,193.07 556.50,193.19 559.00,193.39 561.50,193.61 564.00,193.83 566.50,194.07 569.00,194.32 571.50,194.58 574.00,194.84 576.50,195.11 579.00,195.38 581.50,195.66 584.00,195.94 586.50,196.23 589.00,196.51 589.50,196.50 589.50,355.50 673.50,355.50 674.50,290.50 674.50,212.50 675.50,210.50 678.50,208.50 707.50,208.50 708.50,209.50 737.50,209.50 738.50,210.50 744.50,210.50 745.50,211.50 757.50,211.50 757.50,355.50 842.50,355.50 843.50,290.50 843.50,209.50 846.00,206.86 848.50,204.62 851.00,202.73 853.50,201.13 856.00,199.78 858.50,198.63 861.00,197.66 863.50,196.83 866.00,196.14 868.50,195.55 871.00,195.05 873.50,194.63 876.00,194.27 878.50,193.97 881.00,193.71 883.50,193.50 886.00,193.31 888.50,193.16 891.00,193.02 893.50,193.15 896.00,193.36 898.50,193.58 901.00,193.81 903.50,194.06 906.00,194.31 908.50,194.57 911.00,194.83 913.50,195.10 916.00,195.38 918.50,195.66 921.00,195.94 923.50,196.22 926.00,196.51 928.50,196.80 930.50,196.50"/>
</g>
<path d="M49 356l4 4-4 4" fill="none" stroke="#E8E8E8" stroke-width="1"/>
</svg>
<div style="left:14px;top:345px;width:33px;height:30px;background:#F4FAFA"></div>
<div class="t" style="left:18px;top:348.59px;font-size:11px;line-height:11px;font-weight:400;color:#000;transform:scaleX(0.903);">Ch 3</div>
<div class="t" style="left:18px;top:361.19px;font-size:11px;line-height:11px;font-weight:400;color:#000;transform:scaleX(0.962);">ch 3</div>
<div style="left:456px;top:623px;width:26px;height:16px;background:#FAFAFA;border:1px solid #C8C4C4;box-sizing:border-box"></div>
<div class="t" style="left:460.5px;top:624.69px;font-size:11px;line-height:11px;font-weight:400;color:#000;transform:scaleX(0.879);">HO</div>
<div class="t" style="left:49.6px;top:640.09px;font-size:11px;line-height:11px;font-weight:400;color:#000;">0,00</div>
<div class="t" style="left:119.3px;top:640.09px;font-size:11px;line-height:11px;font-weight:400;color:#000;">5,00</div>
<div class="t" style="left:200.2px;top:640.09px;font-size:11px;line-height:11px;font-weight:400;color:#000;">10,00</div>
<div class="t" style="left:285.2px;top:640.09px;font-size:11px;line-height:11px;font-weight:400;color:#000;">15,00</div>
<div class="t" style="left:369.2px;top:640.09px;font-size:11px;line-height:11px;font-weight:400;color:#000;">20,00</div>
<div class="t" style="left:453.2px;top:640.09px;font-size:11px;line-height:11px;font-weight:400;color:#000;">25,00</div>
<div class="t" style="left:537.2px;top:640.09px;font-size:11px;line-height:11px;font-weight:400;color:#000;">30,00</div>
<div class="t" style="left:621.2px;top:640.09px;font-size:11px;line-height:11px;font-weight:400;color:#000;">35,00</div>
<div class="t" style="left:705.2px;top:640.09px;font-size:11px;line-height:11px;font-weight:400;color:#000;">40,00</div>
<div class="t" style="left:790.2px;top:640.09px;font-size:11px;line-height:11px;font-weight:400;color:#000;">45,00</div>
<div class="t" style="left:868.6px;top:640.09px;font-size:11px;line-height:11px;font-weight:400;color:#000;">50,00</div>
<div class="t" style="left:50px;top:653.00px;font-size:13px;line-height:13px;font-weight:400;color:#000;transform:scaleX(0.982);">Time (ms)</div>
<div style="left:7px;top:685px;width:899px;height:26px;border-top:1px solid #A09C9C;border-left:1px solid #A09C9C;border-right:1px solid #FFF;border-bottom:1px solid #FFF;box-sizing:border-box"></div>
<div style="left:14px;top:692px;width:17px;height:17px;background:#A4C884;border:1px solid #101010;box-sizing:border-box"></div>
<div class="t" style="left:36px;top:695.09px;font-size:11px;line-height:11px;font-weight:400;color:#000;transform:scaleX(0.965);">Ch 0, ch 0</div>
<div style="left:105px;top:692px;width:17px;height:17px;background:#F0E884;border:1px solid #101010;box-sizing:border-box"></div>
<div class="t" style="left:127px;top:695.09px;font-size:11px;line-height:11px;font-weight:400;color:#000;transform:scaleX(0.965);">Ch 1, ch 1</div>
<div style="left:196px;top:692px;width:17px;height:17px;background:#E04434;border:1px solid #101010;box-sizing:border-box"></div>
<div class="t" style="left:218px;top:695.09px;font-size:11px;line-height:11px;font-weight:400;color:#000;transform:scaleX(0.965);">Ch 2, ch 2</div>
<div style="left:287px;top:692px;width:17px;height:17px;background:#D4ECEA;border:1px solid #101010;box-sizing:border-box"></div>
<div class="t" style="left:309px;top:695.09px;font-size:11px;line-height:11px;font-weight:400;color:#000;transform:scaleX(0.965);">Ch 3, ch 3</div>
<div style="left:910px;top:81px;width:111px;height:241px;border-top:1px solid #A09C9C;border-left:1px solid #A09C9C;border-right:1px solid #A09C9C;border-bottom:1px solid #A09C9C;box-sizing:border-box"></div>
<div style="left:911px;top:82px;width:111px;height:241px;border-top:1px solid #FFF;border-left:1px solid #FFF;border-right:1px solid #FFF;border-bottom:1px solid #FFF;box-sizing:border-box"></div>
<div style="left:917.6px;top:79px;width:88.4px;height:5px;background:#E2DEDE"></div>
<div class="t" style="left:920.6px;top:76.99px;font-size:11px;line-height:11px;font-weight:400;color:#000;transform:scaleX(0.948);">Channel Settings</div>
<div style="left:919px;top:101px;width:93px;height:14px;background:#000;border-top:1px solid #606060;border-left:1px solid #606060;box-sizing:border-box"></div>
<div style="left:919px;top:115px;width:94px;height:1px;background:#FFF"></div>
<div class="t" style="left:922.4px;top:104.09px;font-size:11px;line-height:11px;font-weight:400;color:#FFF;transform:scaleX(0.927);">Board CH:</div>
<div class="t" style="left:985.3px;top:104.09px;font-size:11px;line-height:11px;font-weight:400;color:#FFF;">0</div>
<div style="left:1000px;top:102px;width:12px;height:6px;background:#EEEAEA;border-bottom:1px solid #707070;box-sizing:border-box"></div>
<div style="left:1000px;top:108px;width:12px;height:7px;background:#EEEAEA;border-bottom:1px solid #404040;box-sizing:border-box"></div>
<div style="left:1007px;top:105px;width:1px;height:1px;background:#000"></div>
<div style="left:1007px;top:110px;width:1px;height:1px;background:#000"></div>
<div style="left:918px;top:124px;width:29px;height:16px;background:#A4C884"></div>
<div style="left:918px;top:124px;width:29px;height:16px;border:1px solid rgba(0,0,0,0.55);box-sizing:border-box"></div>
<div style="left:928px;top:135px;width:2px;height:1px;background:#101010"></div>
<div style="left:932px;top:135px;width:2px;height:1px;background:#101010"></div>
<div style="left:936px;top:135px;width:2px;height:1px;background:#101010"></div>
<div style="left:951px;top:125px;width:62px;height:17px;background:#000;border-top:1px solid #404040;box-sizing:border-box"></div>
<div style="left:951px;top:142px;width:62px;height:1px;background:#FFF"></div>
<div class="t" style="right:11.5px;top:129.19px;font-size:11px;line-height:11px;font-weight:400;color:#FFF;text-align:right;transform-origin:right center;">2V/div</div>
<div style="left:919px;top:157px;width:93px;height:14px;background:#000;border-top:1px solid #606060;border-left:1px solid #606060;box-sizing:border-box"></div>
<div style="left:919px;top:171px;width:94px;height:1px;background:#FFF"></div>
<div class="t" style="left:922.4px;top:160.09px;font-size:11px;line-height:11px;font-weight:400;color:#FFF;transform:scaleX(0.927);">Board CH:</div>
<div class="t" style="left:985.3px;top:160.09px;font-size:11px;line-height:11px;font-weight:400;color:#FFF;">1</div>
<div style="left:1000px;top:158px;width:12px;height:6px;background:#EEEAEA;border-bottom:1px solid #707070;box-sizing:border-box"></div>
<div style="left:1000px;top:164px;width:12px;height:7px;background:#EEEAEA;border-bottom:1px solid #404040;box-sizing:border-box"></div>
<div style="left:1007px;top:161px;width:1px;height:1px;background:#000"></div>
<div style="left:1007px;top:166px;width:1px;height:1px;background:#000"></div>
<div style="left:918px;top:180px;width:29px;height:16px;background:#F0E884"></div>
<div style="left:918px;top:180px;width:29px;height:16px;border:1px solid rgba(0,0,0,0.55);box-sizing:border-box"></div>
<div style="left:928px;top:191px;width:2px;height:1px;background:#101010"></div>
<div style="left:932px;top:191px;width:2px;height:1px;background:#101010"></div>
<div style="left:936px;top:191px;width:2px;height:1px;background:#101010"></div>
<div style="left:951px;top:181px;width:62px;height:17px;background:#000;border-top:1px solid #404040;box-sizing:border-box"></div>
<div style="left:951px;top:198px;width:62px;height:1px;background:#FFF"></div>
<div class="t" style="right:11.5px;top:185.19px;font-size:11px;line-height:11px;font-weight:400;color:#FFF;text-align:right;transform-origin:right center;">2V/div</div>
<div style="left:919px;top:213px;width:93px;height:14px;background:#000;border-top:1px solid #606060;border-left:1px solid #606060;box-sizing:border-box"></div>
<div style="left:919px;top:227px;width:94px;height:1px;background:#FFF"></div>
<div class="t" style="left:922.4px;top:216.09px;font-size:11px;line-height:11px;font-weight:400;color:#FFF;transform:scaleX(0.927);">Board CH:</div>
<div class="t" style="left:985.3px;top:216.09px;font-size:11px;line-height:11px;font-weight:400;color:#FFF;">2</div>
<div style="left:1000px;top:214px;width:12px;height:6px;background:#EEEAEA;border-bottom:1px solid #707070;box-sizing:border-box"></div>
<div style="left:1000px;top:220px;width:12px;height:7px;background:#EEEAEA;border-bottom:1px solid #404040;box-sizing:border-box"></div>
<div style="left:1007px;top:217px;width:1px;height:1px;background:#000"></div>
<div style="left:1007px;top:222px;width:1px;height:1px;background:#000"></div>
<div style="left:918px;top:236px;width:29px;height:16px;background:#E04434"></div>
<div style="left:918px;top:236px;width:29px;height:16px;border:1px solid rgba(0,0,0,0.55);box-sizing:border-box"></div>
<div style="left:928px;top:247px;width:2px;height:1px;background:#101010"></div>
<div style="left:932px;top:247px;width:2px;height:1px;background:#101010"></div>
<div style="left:936px;top:247px;width:2px;height:1px;background:#101010"></div>
<div style="left:951px;top:237px;width:62px;height:17px;background:#000;border-top:1px solid #404040;box-sizing:border-box"></div>
<div style="left:951px;top:254px;width:62px;height:1px;background:#FFF"></div>
<div class="t" style="right:11.5px;top:241.19px;font-size:11px;line-height:11px;font-weight:400;color:#FFF;text-align:right;transform-origin:right center;">2V/div</div>
<div style="left:919px;top:269px;width:93px;height:14px;background:#000;border-top:1px solid #606060;border-left:1px solid #606060;box-sizing:border-box"></div>
<div style="left:919px;top:283px;width:94px;height:1px;background:#FFF"></div>
<div class="t" style="left:922.4px;top:272.09px;font-size:11px;line-height:11px;font-weight:400;color:#FFF;transform:scaleX(0.927);">Board CH:</div>
<div class="t" style="left:985.3px;top:272.09px;font-size:11px;line-height:11px;font-weight:400;color:#FFF;">3</div>
<div style="left:1000px;top:270px;width:12px;height:6px;background:#EEEAEA;border-bottom:1px solid #707070;box-sizing:border-box"></div>
<div style="left:1000px;top:276px;width:12px;height:7px;background:#EEEAEA;border-bottom:1px solid #404040;box-sizing:border-box"></div>
<div style="left:1007px;top:273px;width:1px;height:1px;background:#000"></div>
<div style="left:1007px;top:278px;width:1px;height:1px;background:#000"></div>
<div style="left:918px;top:292px;width:29px;height:16px;background:#D4ECEA"></div>
<div style="left:918px;top:292px;width:29px;height:16px;border:1px solid rgba(0,0,0,0.55);box-sizing:border-box"></div>
<div style="left:928px;top:303px;width:2px;height:1px;background:#101010"></div>
<div style="left:932px;top:303px;width:2px;height:1px;background:#101010"></div>
<div style="left:936px;top:303px;width:2px;height:1px;background:#101010"></div>
<div style="left:951px;top:293px;width:62px;height:17px;background:#000;border-top:1px solid #404040;box-sizing:border-box"></div>
<div style="left:951px;top:310px;width:62px;height:1px;background:#FFF"></div>
<div class="t" style="right:11.5px;top:297.19px;font-size:11px;line-height:11px;font-weight:400;color:#FFF;text-align:right;transform-origin:right center;">2V/div</div>
<div style="left:910px;top:337px;width:111px;height:65px;border-top:1px solid #A09C9C;border-left:1px solid #A09C9C;border-right:1px solid #A09C9C;border-bottom:1px solid #A09C9C;box-sizing:border-box"></div>
<div style="left:911px;top:338px;width:111px;height:65px;border-top:1px solid #FFF;border-left:1px solid #FFF;border-right:1px solid #FFF;border-bottom:1px solid #FFF;box-sizing:border-box"></div>
<div style="left:917.8px;top:335px;width:71.5px;height:5px;background:#E2DEDE"></div>
<div class="t" style="left:920.8px;top:332.99px;font-size:11px;line-height:11px;font-weight:400;color:#000;transform:scaleX(0.935);">Time Settings</div>
<div class="t" style="left:923.3px;top:357.59px;font-size:11px;line-height:11px;font-weight:400;color:#000;transform:scaleX(0.996);">Seconds/Division</div>
<div style="left:917px;top:372px;width:98px;height:18px;background:#000;border-top:1px solid #404040;box-sizing:border-box"></div>
<div style="left:917px;top:390px;width:98px;height:1px;background:#FFF"></div>
<div class="t" style="right:14.600000000000023px;top:377.09px;font-size:11px;line-height:11px;font-weight:400;color:#FFF;text-align:right;transform-origin:right center;transform:scaleX(0.982);">Time:&nbsp; 5ms/div</div>
<div style="left:910px;top:418px;width:111px;height:151px;border-top:1px solid #A09C9C;border-left:1px solid #A09C9C;border-right:1px solid #A09C9C;border-bottom:1px solid #A09C9C;box-sizing:border-box"></div>
<div style="left:911px;top:419px;width:111px;height:151px;border-top:1px solid #FFF;border-left:1px solid #FFF;border-right:1px solid #FFF;border-bottom:1px solid #FFF;box-sizing:border-box"></div>
<div style="left:917.8px;top:416px;width:82.4px;height:5px;background:#E2DEDE"></div>
<div class="t" style="left:920.8px;top:413.99px;font-size:11px;line-height:11px;font-weight:400;color:#000;transform:scaleX(0.950);">Trigger Settings</div>
<div class="t" style="left:935px;top:430.29px;font-size:11px;line-height:11px;font-weight:400;color:#000;transform:scaleX(0.965);">Trigger Type</div>
<div style="left:916px;top:445px;width:98px;height:18px;background:#000;border-top:1px solid #505050;border-left:1px solid #505050;box-sizing:border-box"></div>
<div style="left:916px;top:463px;width:99px;height:1px;background:#FFF"></div>
<div style="left:1014px;top:445px;width:1px;height:19px;background:#FFF"></div>
<div class="t" style="left:919.8px;top:449.99px;font-size:11px;line-height:11px;font-weight:400;color:#FFF;transform:scaleX(0.985);">Auto Run</div>
<div style="left:998px;top:446px;width:15px;height:16px;background:#ECE8E8;border-left:1px solid #FFF;border-top:1px solid #F4F4F4;border-right:1px solid #404040;border-bottom:1px solid #404040;box-sizing:border-box"></div>
<svg style="position:absolute;left:998px;top:446px" width="15" height="16"><path d="M4 6h7l-3.5 4z" fill="#000"/></svg>
<div style="left:0px;top:720px;width:10px;height:20px;border-top:1px solid #A09C9C;border-left:1px solid #A09C9C;border-right:1px solid #FFF;border-bottom:1px solid #FFF;box-sizing:border-box"></div>
<div style="left:12px;top:720px;width:8px;height:20px;border-top:1px solid #A09C9C;border-left:1px solid #A09C9C;border-right:1px solid #FFF;border-bottom:1px solid #FFF;box-sizing:border-box"></div>
<div style="left:22px;top:720px;width:8px;height:20px;border-top:1px solid #A09C9C;border-left:1px solid #A09C9C;border-right:1px solid #FFF;border-bottom:1px solid #FFF;box-sizing:border-box"></div>
<div style="left:32px;top:720px;width:8px;height:20px;border-top:1px solid #A09C9C;border-left:1px solid #A09C9C;border-right:1px solid #FFF;border-bottom:1px solid #FFF;box-sizing:border-box"></div>
<div style="left:42px;top:720px;width:8px;height:20px;border-top:1px solid #A09C9C;border-left:1px solid #A09C9C;border-right:1px solid #FFF;border-bottom:1px solid #FFF;box-sizing:border-box"></div>
<div style="left:52px;top:720px;width:8px;height:20px;border-top:1px solid #A09C9C;border-left:1px solid #A09C9C;border-right:1px solid #FFF;border-bottom:1px solid #FFF;box-sizing:border-box"></div>
<div style="left:62px;top:720px;width:8px;height:20px;border-top:1px solid #A09C9C;border-left:1px solid #A09C9C;border-right:1px solid #FFF;border-bottom:1px solid #FFF;box-sizing:border-box"></div>
<div style="left:72px;top:720px;width:8px;height:20px;border-top:1px solid #A09C9C;border-left:1px solid #A09C9C;border-right:1px solid #FFF;border-bottom:1px solid #FFF;box-sizing:border-box"></div>
<div style="left:82px;top:720px;width:881px;height:20px;border-top:1px solid #A09C9C;border-left:1px solid #A09C9C;border-right:1px solid #FFF;border-bottom:1px solid #FFF;box-sizing:border-box"></div>
<div style="left:965px;top:720px;width:57px;height:20px;border-top:1px solid #A09C9C;border-left:1px solid #A09C9C;border-right:1px solid #FFF;border-bottom:1px solid #FFF;box-sizing:border-box"></div>
<div class="t" style="left:966.6px;top:724.49px;font-size:11px;line-height:11px;font-weight:400;color:#000;transform:scaleX(0.964);">Zoom Off</div>
<div style="left:0px;top:740px;width:1024px;height:28px;background:#E2DEDE"></div>
<div style="left:0px;top:741px;width:1024px;height:1px;background:#FFF"></div>
<div style="left:2px;top:744px;width:55px;height:22px;background:#E2DEDE;border-top:1px solid #FFF;border-left:1px solid #FFF;border-right:1px solid #404040;border-bottom:1px solid #404040;box-sizing:border-box"></div>
<div style="left:3px;top:745px;width:53px;height:20px;border-right:1px solid #A09C9C;border-bottom:1px solid #A09C9C;box-sizing:border-box"></div>
<svg style="position:absolute;left:6px;top:747px" width="17" height="15" viewBox="0 0 17 15">
<path d="M0.5 3v1M0.5 6v1M0.5 9v1M0.5 12v1" stroke="#101010" stroke-width="1"/>
<path d="M2.5 4h2M2.5 7h2M2.5 10h2M2.5 13h2" stroke="#9070A0" stroke-width="1.2"/>
<path d="M5 2.5q3-2 6 0v11q-3-2-6 0z" fill="#101010"/>
<path d="M6 4q2-1.2 4 0v3.5q-2-1-4 0z" fill="#A04050"/><path d="M6 8.5q2-1 4 0v4q-2-1-4 0z" fill="#3838A0"/>
<path d="M11 1.5q3-1.5 5.5 0.5v12q-2.5-2-5.5-0.5z" fill="#101010"/>
<path d="M12 3q2-0.8 3.5 0.3v4q-1.5-1-3.5-0.3z" fill="#C8D8C0"/><path d="M12 8q2-0.8 3.5 0.3v4q-1.5-1-3.5-0.3z" fill="#E0E0A0"/>
</svg>
<div class="t" style="left:24px;top:749.24px;font-size:12px;line-height:12px;font-weight:700;color:#000;transform:scaleX(1.024);">Start</div>
<div style="left:61px;top:744px;width:1px;height:22px;background:#A09C9C"></div>
<div style="left:62px;top:744px;width:1px;height:22px;background:#FFF"></div>
<div style="left:64px;top:745px;width:1px;height:20px;background:#FFF"></div>
<div style="left:66px;top:745px;width:1px;height:20px;background:#A09C9C"></div>
<svg style="position:absolute;left:72px;top:746px" width="90" height="18">
<path d="M2.5 3.5h12v13h-12z" fill="#E8ECEC"/><path d="M2.5 3.5h4v3h-4z" fill="#7890A0"/><path d="M16.5 3v14.5H2" stroke="#000" stroke-width="2" fill="none"/>
<rect x="6.5" y="8.5" width="6" height="6" fill="#F8F4E0" stroke="#000"/><path d="M9 10l7-8" stroke="#D8C878" stroke-width="3"/><path d="M9.5 11l7-8" stroke="#202020" stroke-width="1"/>
<circle cx="33" cy="9" r="6.5" fill="#5462B4"/><rect x="29" y="7.5" width="8.5" height="2" fill="#D0DCF4"/><path d="M29 6.5q4-4 8 0" stroke="#C0D0F0" stroke-width="1.3" fill="none"/><path d="M27 15q-3-4 6-9t7-2" stroke="#3848A0" stroke-width="1.2" fill="none"/><path d="M31 11.5h6" stroke="#D0DCF4" stroke-width="1.2"/>
<path d="M49 4.5h13v12H49z" fill="#F4F0C8"/><path d="M62.5 6v10.5H51" stroke="#101010" stroke-width="1.2" fill="none"/><circle cx="53.5" cy="8.5" r="3" fill="#C8DCDC" stroke="#101010" stroke-width="1.2"/><path d="M56 11l5 5" stroke="#202050" stroke-width="2"/>
<circle cx="79" cy="8.5" r="7.6" fill="#5A4A18"/><circle cx="79" cy="8.5" r="6.6" fill="#D8C040"/><path d="M75.5 4.5l-1 4q0 2 2 1.5l1.5-5.5M77 11l-1 4h3M76.5 13h2.5M77 11h3" stroke="#3A3010" stroke-width="1.2" fill="none"/>
</svg>
<div style="left:202px;top:744px;width:1px;height:22px;background:#A09C9C"></div>
<div style="left:203px;top:744px;width:1px;height:22px;background:#FFF"></div>
<div style="left:205px;top:745px;width:1px;height:20px;background:#FFF"></div>
<div style="left:207px;top:745px;width:1px;height:20px;background:#A09C9C"></div>
<div style="left:212px;top:744px;width:160px;height:22px;background:#E2DEDE;border-top:1px solid #FFF;border-left:1px solid #FFF;border-right:1px solid #404040;border-bottom:1px solid #404040;box-sizing:border-box"></div>
<div style="left:213px;top:745px;width:158px;height:20px;border-right:1px solid #A09C9C;border-bottom:1px solid #A09C9C;box-sizing:border-box"></div>
<svg style="position:absolute;left:216px;top:747px" width="16" height="16"><rect x="0" y="1" width="16" height="15" fill="#4A8030"/><rect x="2" y="3" width="6" height="5" fill="#90C060"/><rect x="9" y="8" width="5" height="5" fill="#203010"/></svg>
<div class="t" style="left:233.6px;top:749.69px;font-size:11px;line-height:11px;font-weight:400;color:#000;transform:scaleX(0.981);">InstaCal</div>
<div style="left:375px;top:744px;width:160px;height:22px;background:repeating-conic-gradient(#FFFFFF 0% 25%, #E2DEDE 0% 50%) 0 0/2px 2px;border-top:1px solid #404040;border-left:1px solid #404040;border-right:1px solid #FFF;border-bottom:1px solid #FFF;box-sizing:border-box"></div>
<div style="left:376px;top:745px;width:158px;height:20px;border-top:1px solid #A09C9C;border-left:1px solid #A09C9C;box-sizing:border-box"></div>
<svg style="position:absolute;left:379px;top:748px" width="16" height="16"><rect x="1" y="5" width="4" height="6" fill="#C02040"/><rect x="6" y="1" width="8" height="8" fill="#F0E880" stroke="#808040" stroke-width="0.8"/><rect x="6" y="10" width="6" height="4" fill="#4050B0"/></svg>
<div class="t" style="left:397.4px;top:750.67px;font-size:11.5px;line-height:11.5px;font-weight:700;color:#000;transform:scaleX(1.019);">TracerDAQ - [Scope]</div>
<div style="left:538px;top:744px;width:160px;height:22px;background:#E2DEDE;border-top:1px solid #FFF;border-left:1px solid #FFF;border-right:1px solid #404040;border-bottom:1px solid #404040;box-sizing:border-box"></div>
<div style="left:539px;top:745px;width:158px;height:20px;border-right:1px solid #A09C9C;border-bottom:1px solid #A09C9C;box-sizing:border-box"></div>
<svg style="position:absolute;left:543px;top:747px" width="16" height="17"><rect x="1" y="5" width="13" height="11" fill="#F4F0F8" stroke="#303030"/><path d="M3 1l5 9M11 1l-3 9" stroke="#702060" stroke-width="1.5"/><rect x="7" y="9" width="2" height="6" fill="#C8A040"/></svg>
<div class="t" style="left:559.5px;top:749.44px;font-size:11px;line-height:11px;font-weight:400;color:#000;transform:scaleX(0.978);">Unbenannt - Paint</div>
<div style="left:928px;top:744px;width:94px;height:22px;border-top:1px solid #A09C9C;border-left:1px solid #A09C9C;border-right:1px solid #FFF;border-bottom:1px solid #FFF;box-sizing:border-box"></div>
<div style="left:932px;top:747px;width:16px;height:16px;background:#26266E"></div>
<div class="t" style="left:933px;top:749.89px;font-size:11px;line-height:11px;font-weight:400;color:#FFF;transform:scaleX(0.818);">DE</div>
<svg style="position:absolute;left:951px;top:748px" width="14" height="14" fill="#2C2C88"><rect x="1" y="1" width="4" height="2"/><rect x="2" y="3" width="2" height="8"/><rect x="1" y="11" width="4" height="2"/><rect x="9" y="1" width="3" height="1"/><rect x="8" y="2" width="2" height="10"/><rect x="11" y="2" width="2" height="10"/><rect x="9" y="12" width="3" height="1"/></svg>
<div class="t" style="left:981.4px;top:750.99px;font-size:11px;line-height:11px;font-weight:400;color:#000;transform:scaleX(0.963);">14:16</div>
</body></html>
